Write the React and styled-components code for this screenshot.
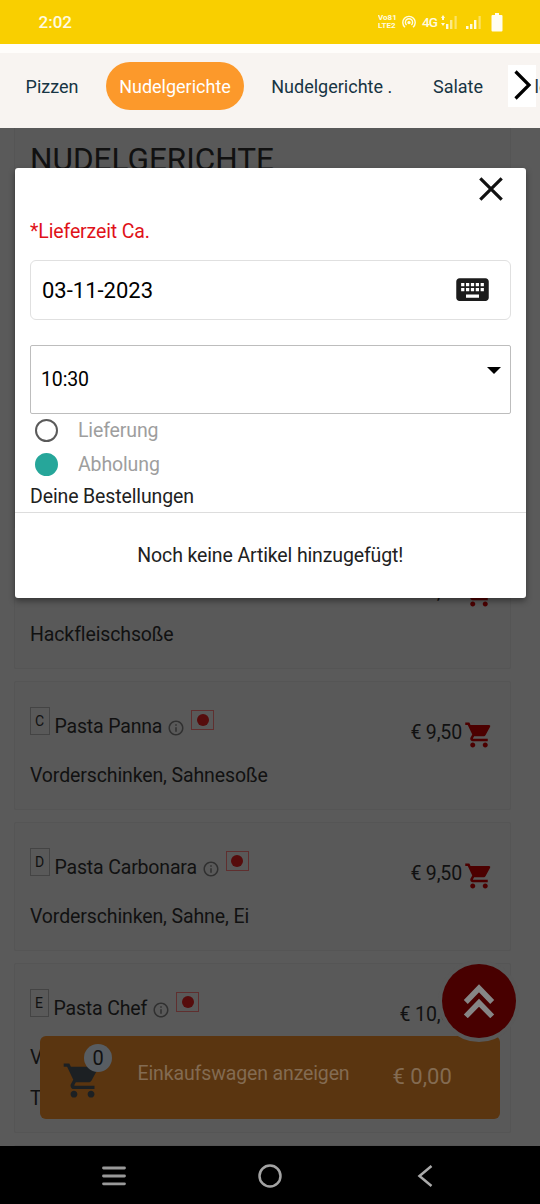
import React from 'react';
import styled, { createGlobalStyle } from 'styled-components';
import { MdKeyboard, MdShoppingCart, MdInfoOutline } from 'react-icons/md';

const GlobalStyle = createGlobalStyle`
  * {
    box-sizing: border-box;
  }
  body {
    margin: 0;
    font-family: Roboto, sans-serif;
    background: #595959;
  }
  h1, h2, p {
    margin: 0;
    font-weight: 400;
  }
  svg {
    display: block;
    flex: none;
  }
`;

const dishes = [
  { price: '€ 9,50', lines: ['Hackfleischsoße'] },
  { code: 'C', name: 'Pasta Panna', price: '€ 9,50', lines: ['Vorderschinken, Sahnesoße'] },
  { code: 'D', name: 'Pasta Carbonara', price: '€ 9,50', lines: ['Vorderschinken, Sahne, Ei'] },
  { code: 'E', name: 'Pasta Chef', price: '€ 10,50', lines: ['V', 'T'] },
];

const Signal = ({ data }) => (
  <svg width='19' height='16' viewBox='0 0 19 16' fill='#fffbe0'>
    {data ? (
      <path d='M3 1l2 3H4v2H2V4H1zM3 12l2-3H1z' />
    ) : (
      <rect x='2' y='12' width='2.5' height='3' />
    )}
    <rect x='6' y='10' width='2.4' height='5' />
    <rect x='10' y='6' width='2.4' height='9' opacity={data ? 0.6 : 1} />
    <rect x='14.500' y='2' width='2.2' height='13' opacity='0.45' />
  </svg>
);

const Dish = ({ code, name, price, lines }) => (
  <Card>
    <TitleRow>
      {name && (
        <>
          <Code $narrow={code === 'E'}>{code}</Code>
          <DishName>{name}</DishName>
          <InfoIcon size={18} />
          <Flag />
        </>
      )}
      <Price>{price}</Price>
      <CartIcon size={30} />
    </TitleRow>
    {lines.map((line) => (
      <Description key={line}>{line}</Description>
    ))}
  </Card>
);

const App = () => {
  return (
    <Screen>
      <GlobalStyle />
      <StatusBar>
        <Clock>2:02</Clock>
        <Volte>
          <span>Vo81</span>
          <span>LTE2</span>
        </Volte>
        <Hotspot width='14' height='14' viewBox='0 0 14 14' fill='none' stroke='#fffbe0' strokeWidth='1.4'>
          <path d='M3 12.3a6.2 6.2 0 1 1 8 0' />
          <path d='M4.6 10a3.6 3.6 0 1 1 4.8 0' />
          <circle cx='7' cy='7.6' r='1' fill='#fffbe0' />
        </Hotspot>
        <Network>4G</Network>
        <Signal data />
        <SecondSignal>
          <Signal />
        </SecondSignal>
        <svg width='12' height='19' viewBox='0 0 12 19' fill='#fffdf0'>
          <path d='M4 0h4v2h2.500a1 1 0 0 1 1 1v14.500a1 1 0 0 1-1 1h-9a1 1 0 0 1-1-1V3a1 1 0 0 1 1-1H4z' />
        </svg>
      </StatusBar>
      <Tabs>
        <Tab $width={80}>Pizzen</Tab>
        <Tab $width={138} $active>Nudelgerichte</Tab>
        <Tab $width={147.5}>Nudelgerichte .</Tab>
        <Tab $width={77}>Salate</Tab>
        <NextButton>
          <svg width='28' height='42' viewBox='0 0 28 42' fill='none' stroke='#000' strokeWidth='3.2'>
            <path d='M7.500 6.500L21 20L7.500 33.500' />
          </svg>
        </NextButton>
        <ClippedTab>le</ClippedTab>
      </Tabs>

      <Content>
        <Menu>
          <Heading>NUDELGERICHTE</Heading>
          {dishes.map((dish) => (
            <Dish key={dish.lines[0] + dish.code} {...dish} />
          ))}
          <Card />
        </Menu>

        <CartBar>
          <CartCount>
            <MdShoppingCart size={41} />
            <Badge>0</Badge>
          </CartCount>
          <CartLabel>Einkaufswagen anzeigen</CartLabel>
          <CartTotal>€ 0,00</CartTotal>
        </CartBar>
        <UpButton>
          <svg width='32' height='34' viewBox='0 0 32 34' fill='none' stroke='#868686' strokeWidth='5.500'>
            <path d='M2.800 18L16 4.300L29.200 18' />
            <path d='M2.800 32.300L16 18.800L29.200 32.300' />
          </svg>
        </UpButton>

        <Modal>
          <CloseButton>
            <svg width='24' height='24' viewBox='0 0 24 24' stroke='#111' strokeWidth='3.2'>
              <path d='M1.300 1.300L22.700 22.700M22.700 1.300L1.300 22.700' />
            </svg>
          </CloseButton>
          <Required>*Lieferzeit Ca.</Required>
          <DateField>
            <span>03-11-2023</span>
            <KeyboardIcon size={39} />
          </DateField>
          <TimeField>
            <span>10:30</span>
            <Arrow width='14' height='7' viewBox='0 0 14 7'>
              <path d='M0 0h14L7 7z' />
            </Arrow>
          </TimeField>
          <Option>
            <Radio />
            Lieferung
          </Option>
          <Option>
            <Radio $checked />
            Abholung
          </Option>
          <Orders>Deine Bestellungen</Orders>
          <Empty>Noch keine Artikel hinzugefügt!</Empty>
        </Modal>
      </Content>

      <SystemNav>
        <svg width='24' height='20' viewBox='0 0 24 20' stroke='#999' strokeWidth='2.800' strokeLinecap='round'>
          <path d='M1.500 2h21M1.500 10h21M1.500 17.800h21' />
        </svg>
        <HomeIcon width='24' height='24' viewBox='0 0 24 24' fill='none' stroke='#a3a3a3' strokeWidth='2.500'>
          <circle cx='12' cy='12' r='10.500' />
        </HomeIcon>
        <svg width='16' height='24' viewBox='0 0 16 24' fill='none' stroke='#aaa' strokeWidth='2.500'>
          <path d='M14.500 2L2.500 12L14.500 22' />
        </svg>
      </SystemNav>
    </Screen>
  );
};

const Screen = styled.div`
  width: 540px;
  height: 1204px;
  display: flex;
  flex-direction: column;
  overflow: hidden;
`;

const StatusBar = styled.header`
  height: 44px;
  flex: none;
  display: flex;
  align-items: center;
  padding: 0 37px 0 38.5px;
  background: #f9cf00;
  color: #fffbe0;
`;

const Clock = styled.span`
  flex: 1;
  font-size: 17px;
  font-weight: 500;
`;

const Volte = styled.span`
  width: 19px;
  display: flex;
  flex-direction: column;
  font-size: 8px;
  font-weight: 700;
  line-height: 8px;
  span {
    height: 8px;
    overflow: hidden;
  }
`;

const Hotspot = styled.svg`
  margin: 0 6px 0 5px;
`;

const Network = styled.span`
  width: 18px;
  font-size: 13.5px;
  font-weight: 500;
  letter-spacing: -1px;
`;

const SecondSignal = styled.span`
  margin: 0 8px 0 5px;
`;

const Tabs = styled.nav`
  height: 84px;
  flex: none;
  display: flex;
  align-items: center;
  padding-left: 12px;
  border-top: 9px solid #fffdfb;
  background: #f8f4f1;
  overflow: hidden;
`;

const Tab = styled.a`
  width: ${({ $width }) => $width}px;
  height: 48px;
  flex: none;
  margin: -9px 14px 0 0;
  display: flex;
  align-items: center;
  justify-content: center;
  border-radius: 24px;
  font-size: 18px;
  white-space: nowrap;
  color: ${({ $active }) => ($active ? '#fff' : '#173443')};
  background: ${({ $active }) => ($active ? '#fc992b' : 'transparent')};
`;

const NextButton = styled.button`
  width: 28px;
  height: 42px;
  flex: none;
  margin-left: -2.5px;
  margin-top: -9px;
  padding: 0;
  border: 0;
  background: #fff;
`;

const ClippedTab = styled.span`
  margin: -9px 0 0 -1.5px;
  font-size: 18px;
  color: #173443;
`;

const Content = styled.main`
  height: 1018px;
  flex: none;
  position: relative;
  overflow: hidden;
  background: #5a5a5a;
`;

const Menu = styled.section`
  width: 497px;
  margin-left: 14px;
  display: flex;
  flex-direction: column;
  gap: 12px;
  color: #111;
`;

const Heading = styled.h1`
  height: 400px;
  flex: none;
  padding: 13px 15px;
  border: 1px solid #555;
  border-top: 0;
  background: #595959;
  font-size: 31.5px;
  line-height: 38px;
`;

const Card = styled.article`
  min-height: 129px;
  flex: none;
  padding: 25px 16.5px 13px 15px;
  border: 1px solid #555;
  border-radius: 2px;
  background: #595959;
`;

const TitleRow = styled.div`
  height: 48px;
  display: flex;
  align-items: flex-start;
`;

const Code = styled.span`
  width: ${({ $narrow }) => ($narrow ? 19 : 20)}px;
  height: 28px;
  margin: 0 5px 0 -0.5px;
  border: 1px solid #444;
  text-align: center;
  font-size: 14px;
  line-height: 26px;
`;

const DishName = styled.h2`
  margin-top: 7.5px;
  font-size: 19.5px;
  line-height: 24px;
  letter-spacing: -0.17px;
`;

const InfoIcon = styled(MdInfoOutline)`
  margin: 12px 0 0 5px;
  color: #303030;
`;

const Flag = styled.span`
  width: 23px;
  height: 20px;
  margin: 3px 0 0 6px;
  display: flex;
  align-items: center;
  justify-content: center;
  border: 1px solid #5f2f2f;
  &::after {
    content: '';
    width: 12px;
    height: 12px;
    border-radius: 50%;
    background: #560c0c;
  }
`;

const Price = styled.span`
  margin: 14px 0 0 auto;
  font-size: 19.5px;
  line-height: 24px;
  letter-spacing: -0.15px;
`;

const CartIcon = styled(MdShoppingCart)`
  margin: 12.5px 0 0 1.5px;
  color: #4c0000;
`;

const Description = styled.p`
  font-size: 19.5px;
  line-height: 41px;
  letter-spacing: -0.12px;
`;

const CartBar = styled.div`
  position: absolute;
  left: 40px;
  top: 908px;
  width: 460px;
  height: 83px;
  display: flex;
  border-radius: 6px;
  background: #5a3510;
  color: #836b52;
`;

const CartCount = styled.div`
  position: relative;
  width: 97.5px;
  padding: 24px 0 0 22px;
  color: #1c2023;
`;

const Badge = styled.span`
  position: absolute;
  left: 44px;
  top: 8px;
  width: 28px;
  height: 28px;
  border-radius: 50%;
  background: #585d62;
  color: #111;
  text-align: center;
  font-size: 20px;
  line-height: 28px;
`;

const CartLabel = styled.span`
  width: 255px;
  padding-top: 26px;
  font-size: 19.5px;
  line-height: 24px;
  letter-spacing: -0.13px;
`;

const CartTotal = styled.span`
  padding-top: 28px;
  font-size: 22px;
  line-height: 25px;
`;

const UpButton = styled.button`
  position: absolute;
  left: 442px;
  top: 836px;
  width: 74px;
  height: 74px;
  padding: 0;
  display: flex;
  align-items: center;
  justify-content: center;
  border: 0;
  border-radius: 50%;
  background: #480000;
  box-shadow: 0 0 0 4px #595959;
`;

const Modal = styled.div`
  position: absolute;
  left: 15px;
  top: 40px;
  width: 510.5px;
  height: 430px;
  display: flex;
  flex-direction: column;
  border-radius: 3px;
  background: #fff;
  color: #212121;
  font-size: 19.5px;
  letter-spacing: -0.13px;
  box-shadow: 0 3px 6px rgba(0, 0, 0, 0.4);
  > * {
    flex: none;
  }
`;

const CloseButton = styled.button`
  align-self: flex-end;
  margin: 9px 23px 0 0;
  padding: 0;
  border: 0;
  background: none;
`;

const Required = styled.label`
  margin: 19px 15px 0;
  line-height: 24px;
  color: #df1219;
`;

const DateField = styled.div`
  height: 60px;
  margin: 16px 15px 0 14.5px;
  padding: 1px 17.5px 0 11.5px;
  display: flex;
  align-items: center;
  justify-content: space-between;
  border: 1px solid #e0e0e0;
  border-radius: 6px;
  font-size: 22px;
  letter-spacing: 0;
  color: #000;
`;

const KeyboardIcon = styled(MdKeyboard)`
  margin-top: -3px;
  color: #1c1c1c;
`;

const TimeField = styled.div`
  height: 69px;
  margin: 25px 14.5px 0;
  padding: 0 9.5px 0 10.5px;
  display: flex;
  align-items: center;
  justify-content: space-between;
  border: 1px solid #bdbdbd;
  border-radius: 2px;
  color: #000;
`;

const Arrow = styled.svg`
  margin-top: -18px;
`;

const Option = styled.label`
  height: 34px;
  display: flex;
  align-items: center;
  gap: 20.5px;
  padding: 0 0 2px 19.5px;
  color: #9e9e9e;
`;

const Radio = styled.span`
  width: 23px;
  height: 23px;
  border: 2.5px solid ${({ $checked }) => ($checked ? '#26a69a' : '#5a5a5a')};
  border-radius: 50%;
  background: ${({ $checked }) => ($checked ? '#26a69a' : '#fff')};
`;

const Orders = styled.h2`
  height: 31px;
  padding-left: 15px;
  border-bottom: 1px solid #ddd;
  font-size: 19.5px;
  line-height: 29px;
`;

const Empty = styled.p`
  line-height: 85px;
  text-align: center;
`;

const SystemNav = styled.footer`
  height: 58px;
  flex: none;
  display: flex;
  align-items: center;
  justify-content: space-between;
  padding: 1px 107px 0 102px;
  background: #000;
`;

const HomeIcon = styled.svg`
  margin-right: 4px;
`;

export default App;
